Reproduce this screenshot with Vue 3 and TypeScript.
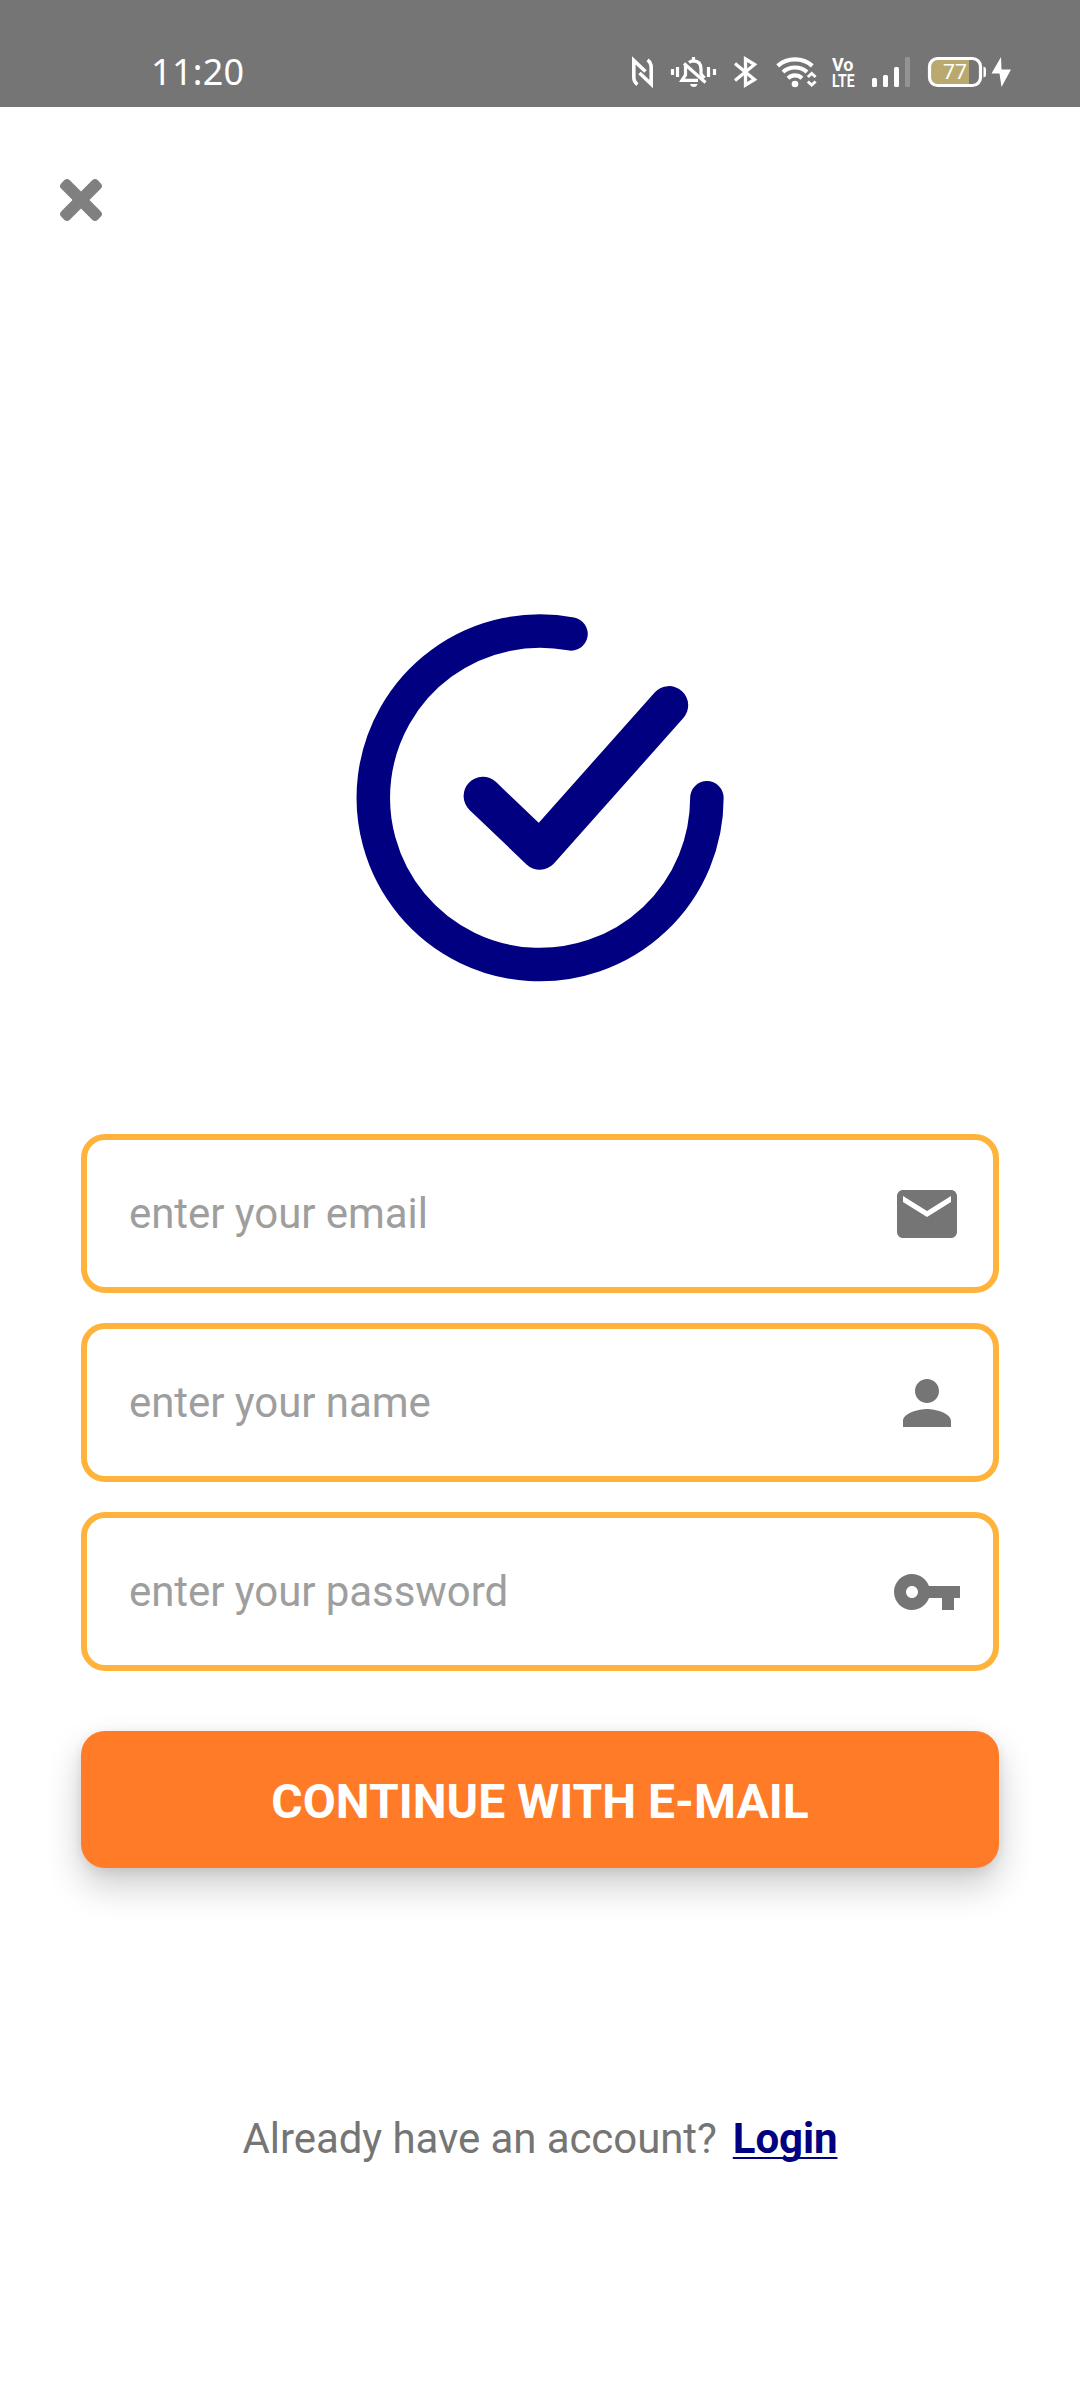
<script setup lang="ts">
interface Field {
  name: string
  type: string
  placeholder: string
  icon: string
}

const fields: Field[] = [
  {
    name: 'email',
    type: 'email',
    placeholder: 'enter your email',
    icon: 'M20 4H4c-1.1 0-1.99.9-1.99 2L2 18c0 1.1.9 2 2 2h16c1.1 0 2-.9 2-2V6c0-1.1-.9-2-2-2zm0 4l-8 5-8-5V6l8 5 8-5v2z',
  },
  {
    name: 'name',
    type: 'text',
    placeholder: 'enter your name',
    icon: 'M12 12c2.21 0 4-1.79 4-4s-1.79-4-4-4-4 1.79-4 4 1.79 4 4 4zm0 2c-2.67 0-8 1.34-8 4v2h16v-2c0-2.66-5.33-4-8-4z',
  },
  {
    name: 'password',
    type: 'password',
    placeholder: 'enter your password',
    icon: 'M12.65 10C11.83 7.67 9.61 6 7 6c-3.31 0-6 2.69-6 6s2.69 6 6 6c2.61 0 4.83-1.67 5.65-4H17v4h4v-4h2v-4H12.65zM7 14c-1.1 0-2-.9-2-2s.9-2 2-2 2 .9 2 2-.9 2-2 2z',
  },
]
</script>

<template>
  <div class="screen">
    <header class="status">
      <span class="time">11:20</span>
      <div class="indicators">
        <!-- NFC -->
        <svg width="40" height="40" viewBox="622 52 40 40" fill="none" stroke="#fff" stroke-width="3.6">
          <path d="M637.500 84.500Q633.800 82 633.800 77V60.500L645.500 71.500M647.500 60Q651.200 62.500 651.200 67.500V84L639.500 73" />
        </svg>
        <!-- silent with vibration -->
        <svg width="60" height="40" viewBox="662 52 60 40" fill="none" stroke="#fff" stroke-width="3.2">
          <path d="M672.500 69v6M677.500 67v10M708.500 67v10M714.500 69v6" />
          <path d="M689 62.500Q691 60.800 693.500 60.800Q701 61 701 69V74L704.500 78M685.500 66V75L682 80.300H698" />
          <path d="M684 63.500L705.500 82.500" />
          <path d="M693.500 57v4" />
          <path d="M690 84h7.500q-.7 3-3.750 3t-3.750-3z" fill="#fff" stroke="none" />
        </svg>
        <!-- bluetooth -->
        <svg width="46" height="40" viewBox="722 52 46 40" fill="none" stroke="#fff" stroke-width="3.3">
          <path d="M735 63.500L754.500 79.500L745.500 85V59L754.500 64.500L735 80.500" />
        </svg>
        <!-- wifi -->
        <svg width="60" height="40" viewBox="768 52 60 40" fill="none" stroke="#fff" stroke-width="4.200">
          <path d="M777.700 65.800Q785 59.400 795 59.400T812.300 65.800M783 72Q788 67.500 795 67.500T807 72M788 78.200Q791 75.400 795 75.400T802 78.200" />
          <circle cx="795" cy="84" r="3.300" fill="#fff" stroke="none" />
          <path d="M807.800 77L811.700 73.500L815.600 77M807.800 81.500L811.700 85L815.600 81.500" stroke-width="3" />
        </svg>
        <!-- VoLTE, signal -->
        <svg width="92" height="40" viewBox="828 52 92 40" fill="#fff">
          <text x="832" y="70.800" textLength="21.500" lengthAdjust="spacingAndGlyphs" class="volte">Vo</text>
          <text x="832" y="87" textLength="22.500" lengthAdjust="spacingAndGlyphs" class="volte">LTE</text>
          <rect x="872" y="78" width="5" height="9" rx="1.500" />
          <rect x="883" y="75" width="5" height="12" rx="1.500" />
          <rect x="894" y="67" width="5" height="20" rx="1.500" />
          <rect x="905" y="57" width="5" height="30" rx="1.500" opacity=".22" />
        </svg>
        <!-- battery -->
        <svg width="96" height="40" viewBox="920 52 96 40" fill="#fff">
          <path d="M969 59H936q-6.500 0-6.500 6.500V79q0 6.500 6.500 6.500H969z" fill="#b9a96f" />
          <rect x="929.500" y="58.500" width="51" height="27" rx="8" fill="none" stroke="#fff" stroke-width="3.200" />
          <path d="M983.500 66.500q2.500.5 2.500 2.500v6q0 2-2.500 2.500z" />
          <text x="943" y="79" textLength="24" lengthAdjust="spacingAndGlyphs" class="level">77</text>
          <path d="M1001 57L991.500 73.500H999.500L1001.500 87L1011 69.500H1001.500z" />
        </svg>
      </div>
    </header>

    <nav class="topbar">
      <svg class="close" width="44" height="44" viewBox="-22 -22 44 44" fill="#808080">
        <rect x="-25.800" y="-6" width="51.600" height="12" rx="4" transform="rotate(45)" />
        <rect x="-25.800" y="-6" width="51.600" height="12" rx="4" transform="rotate(-45)" />
      </svg>
    </nav>

    <svg class="logo" width="368" height="368" viewBox="356 614 368 368" fill="none" stroke="#000080" stroke-linecap="round" stroke-linejoin="round">
      <path d="M706.900 797.800A166.800 166.800 0 1 1 571 633.900" stroke-width="33.500" />
      <path d="M482.800 796L539.800 850.500L669 705.300" stroke-width="38.400" />
    </svg>

    <form class="form" @submit.prevent>
      <label v-for="f in fields" :key="f.name" class="field">
        <input :type="f.type" :name="f.name" :placeholder="f.placeholder" />
        <svg width="72" height="72" viewBox="0 0 24 24" fill="#757575"><path :d="f.icon" /></svg>
      </label>
      <button class="submit" type="submit">CONTINUE WITH E-MAIL</button>
    </form>

    <p class="footer"><span>Already have an account?</span><a>Login</a></p>
  </div>
</template>

<style>
body {
  background: #fff;
}
</style>

<style scoped>
.screen {
  width: 1080px;
  height: 2400px;
  background: #fff;
  font-family: Roboto, 'Liberation Sans', sans-serif;
  display: flex;
  flex-direction: column;
  align-items: center;
  overflow: hidden;
}
.status {
  width: 1080px;
  height: 107px;
  box-sizing: border-box;
  padding: 52px 64px 0 151px;
  background: #757575;
  color: #fff;
  display: flex;
  justify-content: space-between;
}
.time {
  font: 36px/40px 'Noto Sans', sans-serif;
  letter-spacing: 0.3px;
}
.indicators {
  display: flex;
  height: 40px;
}
.volte {
  font: bold 19px Roboto, sans-serif;
}
.level {
  font: 21px Roboto, sans-serif;
}
.topbar {
  width: 100%;
  height: 507px;
  box-sizing: border-box;
  padding: 70.500px 0 0 58.500px;
}
.close,
.logo {
  display: block;
}
.form {
  width: 918px;
  margin-top: 152px;
  display: flex;
  flex-direction: column;
  gap: 30px;
}
.field {
  height: 159px;
  box-sizing: border-box;
  border: 6px solid #ffb33a;
  border-radius: 24px;
  padding: 0 30px 0 42px;
  display: flex;
  align-items: center;
}
.field input {
  flex: 1;
  min-width: 0;
  padding: 0;
  border: 0;
  outline: 0;
  background: none;
  font: 42px/50px Roboto, sans-serif;
  letter-spacing: -0.06px;
}
.field input::placeholder {
  color: #9e9e9e;
  opacity: 1;
}
.submit {
  height: 137px;
  margin-top: 30px;
  padding: 5px 0 0;
  border: 0;
  border-radius: 24px;
  background: #ff7b27;
  color: #fff;
  font: bold 48px/56px Roboto, sans-serif;
  box-shadow: 0 18px 36px rgba(0, 0, 0, 0.2), 0 3px 12px rgba(0, 0, 0, 0.09);
}
.footer {
  margin: 246px 0 0;
  display: flex;
  gap: 16px;
  font-size: 42px;
  line-height: 50px;
  letter-spacing: -0.08px;
  color: #757575;
}
.footer a {
  color: #000080;
  font-weight: bold;
  text-decoration: underline;
  text-decoration-thickness: 2px;
  text-underline-offset: 4px;
  text-decoration-skip-ink: none;
}
</style>
